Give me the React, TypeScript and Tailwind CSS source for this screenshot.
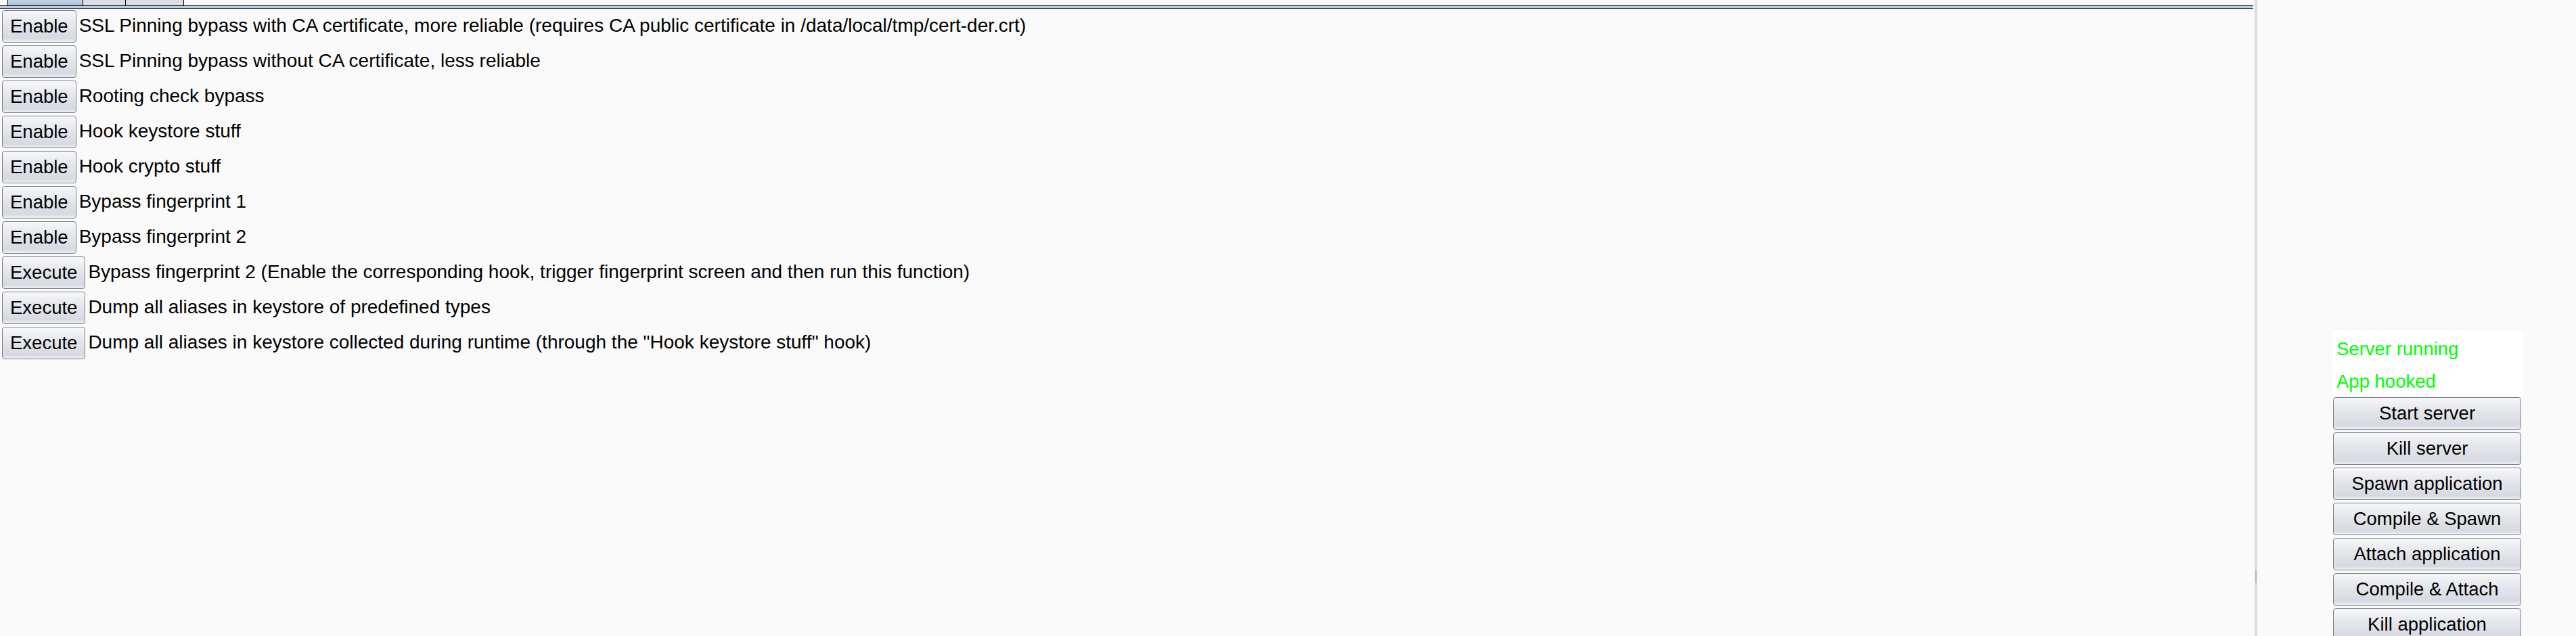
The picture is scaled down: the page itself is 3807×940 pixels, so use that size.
const hooks: { label: string; text: string }[] = [
  { label: "Enable", text: "SSL Pinning bypass with CA certificate, more reliable (requires CA public certificate in /data/local/tmp/cert-der.crt)" },
  { label: "Enable", text: "SSL Pinning bypass without CA certificate, less reliable" },
  { label: "Enable", text: "Rooting check bypass" },
  { label: "Enable", text: "Hook keystore stuff" },
  { label: "Enable", text: "Hook crypto stuff" },
  { label: "Enable", text: "Bypass fingerprint 1" },
  { label: "Enable", text: "Bypass fingerprint 2" },
  { label: "Execute", text: "Bypass fingerprint 2 (Enable the corresponding hook, trigger fingerprint screen and then run this function)" },
  { label: "Execute", text: "Dump all aliases in keystore of predefined types" },
  { label: "Execute", text: 'Dump all aliases in keystore collected during runtime (through the "Hook keystore stuff" hook)' },
];

const actions = [
  "Start server",
  "Kill server",
  "Spawn application",
  "Compile & Spawn",
  "Attach application",
  "Compile & Attach",
  "Kill application",
];

const btn =
  "h-[48px] shrink-0 rounded-[4px] border border-[#7d8088] bg-[linear-gradient(to_bottom,#f6f7f9,#e4e6eb_45%,#d6d9e1_88%,#eef0f4)] text-[27.5px] text-black leading-none";

export default function App() {
  return (
    <div className="flex h-[940px] w-full overflow-hidden bg-[#fafafa] font-['Liberation_Sans',Arial,sans-serif] text-[27.5px] text-black">
      {/* left: tabbed hook list */}
      <div className="flex min-w-0 flex-1 flex-col">
        <div className="flex h-[8px] pl-[11px]">
          <div className="w-[112px] border-x border-black bg-[linear-gradient(to_bottom,#c4d5e8,#a9c0da)]" />
          <div className="w-[63px] border-r border-black bg-[#dcdee5]" />
          <div className="w-[86px] border-r border-black bg-[#dcdee5]" />
        </div>
        <div className="mr-[2px] h-[1px] bg-black" />
        <div className="mr-[2px] h-[3px] bg-[#b9cde4]" />
        <div className="mr-[2px] h-[1px] bg-[#3c414a]" />
        <div className="flex flex-col gap-[4px] pl-[3px] pt-[2px]">
          {hooks.map((h, i) => (
            <div key={i} className="flex h-[48px] items-center gap-[4px]">
              <button className={`${btn} px-[11px]`}>{h.label}</button>
              <span className="-mt-[3px] whitespace-nowrap text-[28px]">{h.text}</span>
            </div>
          ))}
        </div>
      </div>

      {/* splitter */}
      <div className="flex w-[4px] flex-col bg-[#dcdde4] pt-[843px]">
        <div className="mx-[1px] h-[19px] rounded-[1px] border border-[#b9bbc3] bg-[#cfd1d8]" />
      </div>

      {/* right: server controls */}
      <div className="w-[471px] pl-[110px] pt-[489px]">
        <div className="flex w-[282px] flex-col">
          <div className="flex flex-col bg-white px-[7px] text-[#00ff00]">
            <div className="flex h-[48px] items-center pt-[6px]">Server running</div>
            <div className="flex h-[48px] items-center pt-[6px]">App hooked</div>
          </div>
          <div className="mx-[2px] mt-[2px] flex flex-col gap-[4px]">
            {actions.map((a) => (
              <button key={a} className={`${btn} w-full text-center`}>
                {a}
              </button>
            ))}
          </div>
        </div>
      </div>
    </div>
  );
}
